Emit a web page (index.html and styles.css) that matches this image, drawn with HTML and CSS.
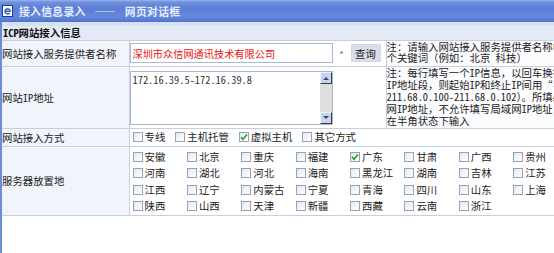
FILE: index.html
```html
<!DOCTYPE html>
<html lang="zh-CN">
<head>
<meta charset="utf-8">
<title>接入信息录入</title>
<link rel="stylesheet" href="styles.css">
</head>
<body>
<div class="window">
  <div class="titlebar">
    <svg class="app-icon" width="11" height="12" viewBox="0 0 11 12">
      <rect x="0.5" y="0.5" width="10" height="11" fill="#ffffff" stroke="#1f3f8f"/>
      <path d="M3 6.2h5.2a2.6 2.6 0 1 0 -0.6 1.9" fill="none" stroke="#2a62d0" stroke-width="1.5"/>
    </svg>
    <span class="title">接入信息录入 —— 网页对话框</span>
  </div>
  <div class="client">
    <div class="topstrip"></div>
    <table class="form">
      <colgroup><col class="c-label"><col class="c-field"><col class="c-note"></colgroup>
      <tr class="row-head"><th colspan="3">ICP网站接入信息</th></tr>
      <tr class="row-provider">
        <td class="label">网站接入服务提供者名称</td>
        <td class="field">
          <div class="field-line">
            <input type="text" class="text-input" value="深圳市众信网通讯技术有限公司">
            <span class="req">*</span>
            <button class="btn" type="button">查询</button>
          </div>
        </td>
        <td class="note note-top">注：请输入网站接入服务提供者名称中的一<br>个关键词（例如：北京 科技）</td>
      </tr>
      <tr class="row-ip">
        <td class="label">网站IP地址</td>
        <td class="field field-top">
          <div class="fake-textarea">
            <div class="ta-text">172.16.39.5-172.16.39.8</div>
            <div class="scrollbar">
              <span class="sb-btn"><svg width="6" height="4" viewBox="0 0 6 4"><path d="M0 4L3 1L6 4Z" fill="#3a4a6a"/></svg></span>
              <span class="sb-track"></span>
              <span class="sb-btn"><svg width="6" height="4" viewBox="0 0 6 4"><path d="M0 0L3 3L6 0Z" fill="#3a4a6a"/></svg></span>
            </div>
          </div>
        </td>
        <td class="note note-top note-ip">注：每行填写一个IP信息，以回车换行分隔<br>IP地址段，则起始IP和终止IP间用“-”连接<br>211.68.0.100-211.68.0.102）。所填必须<br>网IP地址，不允许填写局域网IP地址，且<br>在半角状态下输入</td>
      </tr>
      <tr class="row-mode">
        <td class="label">网站接入方式</td>
        <td class="field" colspan="2">
          <div class="mode-list">
            <span class="chk-item"><span class="chk"></span>专线</span>
            <span class="chk-item"><span class="chk"></span>主机托管</span>
            <span class="chk-item"><span class="chk checked"><svg width="8" height="8" viewBox="0 0 8 8"><path d="M1 4L3 6.2L7 1.5" fill="none" stroke="#21a121" stroke-width="1.6"/></svg></span>虚拟主机</span>
            <span class="chk-item"><span class="chk"></span>其它方式</span>
          </div>
        </td>
      </tr>
      <tr class="row-place">
        <td class="label">服务器放置地</td>
        <td class="field field-top" colspan="2">
          <div class="prov-grid">
            <span class="chk-item"><span class="chk"></span>安徽</span>
            <span class="chk-item"><span class="chk"></span>北京</span>
            <span class="chk-item"><span class="chk"></span>重庆</span>
            <span class="chk-item"><span class="chk"></span>福建</span>
            <span class="chk-item"><span class="chk checked"><svg width="8" height="8" viewBox="0 0 8 8"><path d="M1 4L3 6.2L7 1.5" fill="none" stroke="#21a121" stroke-width="1.6"/></svg></span>广东</span>
            <span class="chk-item"><span class="chk"></span>甘肃</span>
            <span class="chk-item"><span class="chk"></span>广西</span>
            <span class="chk-item"><span class="chk"></span>贵州</span>
            <span class="chk-item"><span class="chk"></span>河南</span>
            <span class="chk-item"><span class="chk"></span>湖北</span>
            <span class="chk-item"><span class="chk"></span>河北</span>
            <span class="chk-item"><span class="chk"></span>海南</span>
            <span class="chk-item"><span class="chk"></span>黑龙江</span>
            <span class="chk-item"><span class="chk"></span>湖南</span>
            <span class="chk-item"><span class="chk"></span>吉林</span>
            <span class="chk-item"><span class="chk"></span>江苏</span>
            <span class="chk-item"><span class="chk"></span>江西</span>
            <span class="chk-item"><span class="chk"></span>辽宁</span>
            <span class="chk-item"><span class="chk"></span>内蒙古</span>
            <span class="chk-item"><span class="chk"></span>宁夏</span>
            <span class="chk-item"><span class="chk"></span>青海</span>
            <span class="chk-item"><span class="chk"></span>四川</span>
            <span class="chk-item"><span class="chk"></span>山东</span>
            <span class="chk-item"><span class="chk"></span>上海</span>
            <span class="chk-item"><span class="chk"></span>陕西</span>
            <span class="chk-item"><span class="chk"></span>山西</span>
            <span class="chk-item"><span class="chk"></span>天津</span>
            <span class="chk-item"><span class="chk"></span>新疆</span>
            <span class="chk-item"><span class="chk"></span>西藏</span>
            <span class="chk-item"><span class="chk"></span>云南</span>
            <span class="chk-item"><span class="chk"></span>浙江</span>
          </div>
        </td>
      </tr>
    </table>
  </div>
</div>
</body>
</html>
```

FILE: styles.css
```css
* { box-sizing: border-box; }
html, body { margin: 0; padding: 0; }
body {
  width: 554px;
  height: 253px;
  overflow: hidden;
  background: #ffffff;
  font-family: "Noto Sans Mono CJK SC", "Noto Sans CJK SC", sans-serif;
  font-size: 10.4px;
  color: #222222;
}
.window { display: flex; flex-direction: column; height: 253px; }
.titlebar {
  height: 22px;
  flex: none;
  display: flex;
  align-items: center;
  gap: 6px;
  padding-left: 2px;
  background: linear-gradient(to bottom, #9db4ea 0, #7091de 2px, #5b7ed6 8px, #6588da 16px, #5579d2 21px, #4b6dc6 22px);
}
.app-icon { flex: none; }
.title {
  color: #e6edff;
  font-weight: bold;
  font-size: 10.8px;
  letter-spacing: 0.3px;
  word-spacing: 3px;
  white-space: nowrap;
}
.client {
  flex: 1;
  border-left: 2px solid #6b8cd8;
  background: #ffffff;
  overflow: hidden;
}
.topstrip { height: 4px; background: #d8e0f3; }
table.form {
  border-collapse: collapse;
  table-layout: fixed;
  width: 720px;
}
col.c-label { width: 127px; }
col.c-field { width: 257px; }
col.c-note { width: 336px; }
.form th, .form td {
  border: 1px solid #c6cfe0;
  padding: 0;
  white-space: nowrap;
  overflow: hidden;
}
.form tr:first-child th { border-top: none; }
.form tr > :first-child { border-left: none; }
.row-head th {
  height: 14px;
  background: #e3e9f5;
  text-align: left;
  font-weight: bold;
  padding-left: 1px;
  line-height: 13px;
  color: #111111;
}
.label {
  background: #f1f4fa;
  padding-left: 1px;
  vertical-align: middle;
}
.row-provider td { height: 26px; }
.row-ip td { height: 62px; }
.row-mode td { height: 18px; }
.row-place td { height: 67px; }
.field { vertical-align: middle; padding-left: 1px; }
.field-top { vertical-align: top; }
.field-line { display: flex; align-items: center; }
.text-input {
  width: 203px;
  height: 20px;
  margin: 0;
  border: 1px solid #a7b8d0;
  padding: 0 2px;
  font: inherit;
  font-size: 10.2px;
  color: #ee1111;
  background: #ffffff;
  outline: none;
}
.req { color: #d83a3a; width: 18px; text-align: center; font-size: 9px; padding-top: 3px; }
.btn {
  width: 30px;
  height: 18px;
  margin: 0;
  padding: 0;
  border: 1px solid #d3d9e4;
  background: #d9dfea;
  font: inherit;
  color: #222222;
}
.note {
  vertical-align: top;
  padding-left: 3px;
  line-height: 11px;
  background: #fbfcfe;
}
.note-top { padding-top: 4px; }
.note-ip { line-height: 12px; padding-top: 2px; }
.fake-textarea {
  margin-top: 4px;
  width: 203px;
  height: 54px;
  border: 1px solid #a9b7cc;
  display: flex;
  background: #ffffff;
}
.ta-text { flex: 1; padding: 2px 2px; line-height: 12px; color: #333333; }
.scrollbar {
  width: 12px;
  display: flex;
  flex-direction: column;
  background: #e3e3e3;
}
.sb-btn {
  height: 12px;
  flex: none;
  display: flex;
  align-items: center;
  justify-content: center;
  background: #c9d4ee;
  border-top: 1px solid #eef2fb;
  border-left: 1px solid #eef2fb;
  border-right: 1px solid #3c3c3c;
  border-bottom: 1px solid #3c3c3c;
}
.sb-track { flex: 1; background: #dedede; }
.mode-list { display: flex; padding-left: 3px; }
.mode-list .chk-item { margin-right: 10px; }
.chk-item {
  display: inline-flex;
  align-items: center;
  gap: 2px;
  white-space: nowrap;
  line-height: 12px;
}
.chk {
  flex: none;
  width: 10px;
  height: 10px;
  border: 1px solid #95a3b9;
  background: linear-gradient(135deg, #e4e8ef, #ffffff);
  display: inline-flex;
  align-items: center;
  justify-content: center;
}
.prov-grid {
  display: grid;
  grid-template-columns: repeat(8, 54.4px);
  grid-auto-rows: 16.5px;
  align-items: center;
  padding-left: 3px;
  padding-top: 2px;
}
```
